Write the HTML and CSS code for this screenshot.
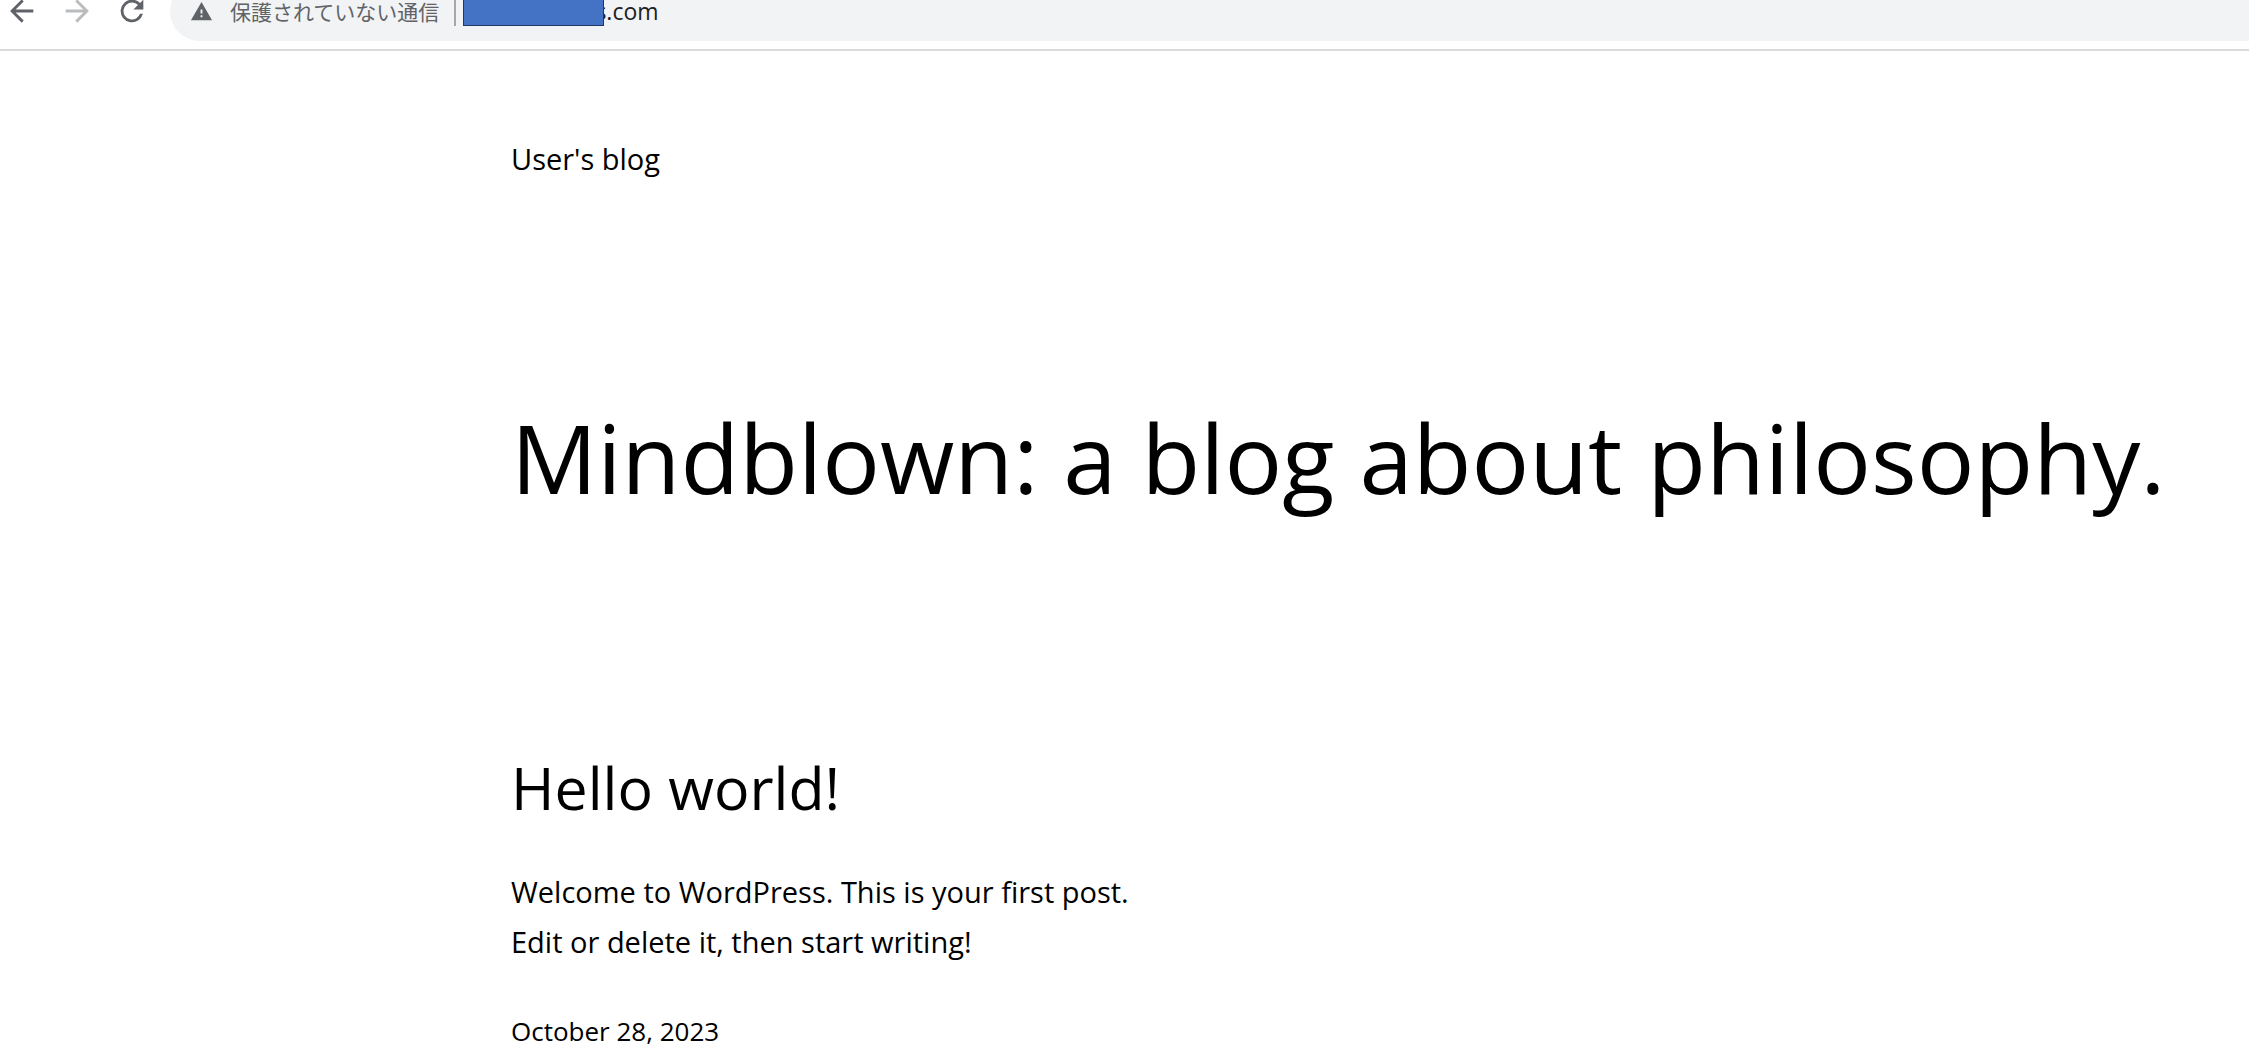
FILE: index.html
```html
<!DOCTYPE html>
<html lang="en">
  <head>
    <meta charset="UTF-8" />
    <meta name="viewport" content="width=device-width, initial-scale=1.0" />
    <title>User's blog</title>
    <link rel="stylesheet" href="styles.css">
  </head>
  <body>
    <div class="toolbar">
      <button class="nav-button" aria-label="Back">
        <svg viewBox="0 0 24 24" width="34" height="34"><path d="M20 12H5M12.500 4.500L5 12l7.500 7.500" /></svg>
      </button>
      <button class="nav-button disabled" aria-label="Forward" disabled>
        <svg viewBox="0 0 24 24" width="34" height="34"><path d="M4 12h15M11.500 4.500L19 12l-7.500 7.500" /></svg>
      </button>
      <button class="nav-button" aria-label="Reload">
        <svg class="solid" viewBox="0 0 24 24" width="34" height="34"><path d="M17.650 6.350A7.960 7.960 0 0 0 12 4a8 8 0 1 0 7.730 10h-2.080A6 6 0 1 1 12 6c1.660 0 3.140.690 4.220 1.780L13 11h7V4z" /></svg>
      </button>
      <div class="address">
        <svg class="solid" viewBox="0 0 24 24" width="23" height="23"><path d="M1 21h22L12 2zm12-3h-2v-2h2zm0-4h-2v-4h2z" /></svg>
        <span class="security" lang="ja">保護されていない通信</span>
        <span class="divider"></span>
        <span class="mask"></span>
        <input class="url" type="text" value="s.com" aria-label="Address">
      </div>
    </div>

    <main class="page">
      <a class="site-title" href="#">User's blog</a>
      <h1>Mindblown: a blog about philosophy.</h1>
      <article class="post">
        <h2><a href="#">Hello world!</a></h2>
        <p>Welcome to WordPress. This is your first post.<br>Edit or delete it, then start writing!</p>
        <a class="date" href="#"><time datetime="2023-10-28">October 28, 2023</time></a>
      </article>
    </main>
  </body>
</html>
```

FILE: styles.css
```css
body {
  margin: 0;
  background-color: #fff;
  color: #000;
  font-family: "Open Sans", "Noto Sans", sans-serif;
  font-size: 29px;
  line-height: 50px;
}

a {
  color: inherit;
  text-decoration: none;
}

/* browser bar, its upper part runs off the window */
.toolbar {
  display: flex;
  align-items: flex-end;
  height: 41px;
  padding: 0 0 8px 5px;
  border-bottom: 2px solid #d9dadb;
  overflow: hidden;
}

.nav-button {
  display: flex;
  flex: none;
  align-items: center;
  width: 55px;
  height: 60px;
  padding: 0;
  border: none;
  background: none;
  color: #5f6368;
}

.nav-button.disabled {
  color: #babcbe;
}

svg {
  flex: none;
  fill: none;
  stroke: currentColor;
  stroke-width: 2;
}

svg.solid {
  fill: currentColor;
  stroke: none;
}

.address {
  display: flex;
  flex: 1;
  align-items: center;
  height: 60px;
  padding-left: 20px;
  border-radius: 30px 0 0 30px;
  background-color: #f1f3f4;
  color: #5f6368;
}

.security {
  margin-left: 17px;
  font-family: "Noto Sans CJK JP", sans-serif;
  font-size: 21px;
  line-height: 22px;
  white-space: nowrap;
}

.divider {
  width: 2px;
  height: 30px;
  margin: 0 7px 0 15px;
  background-color: #a5a8ab;
}

.mask {
  z-index: 1;
  box-sizing: border-box;
  width: 141px;
  height: 30px;
  border: 1px solid #1f3864;
  background-color: #4472c4;
}

.url {
  flex: 1;
  min-width: 0;
  margin-left: -9px;
  padding: 0;
  border: none;
  outline: none;
  background: none;
  color: #202124;
  font-family: inherit;
  font-size: 23px;
}

.page {
  padding: 83px 60px 0 511px;
}

.site-title {
  display: block;
}

h1 {
  margin: 213px 0 230px;
  font-size: 96px;
  font-weight: 400;
  line-height: 120px;
}

h2 {
  margin: 0 0 40px;
  font-size: 59px;
  font-weight: 400;
  line-height: 80px;
}

p {
  margin: 0 0 44px;
}

.date {
  display: block;
  font-size: 26px;
  line-height: 40px;
}
```
